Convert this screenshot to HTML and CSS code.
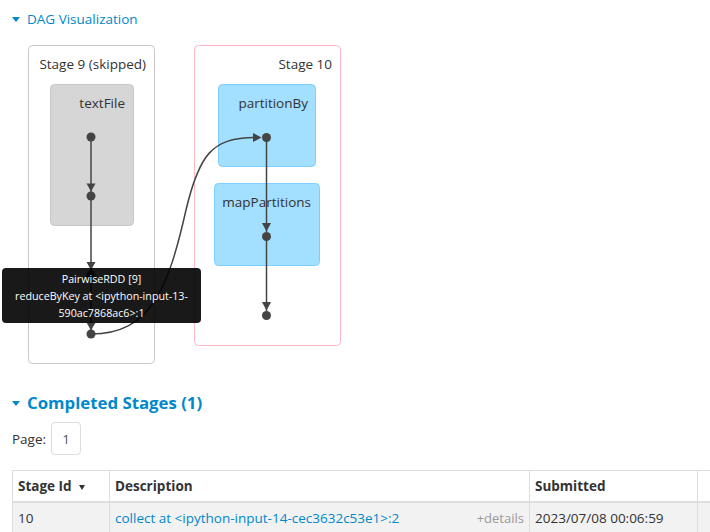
FILE: index.html
```html
<!DOCTYPE html>
<html>
<head>
<meta charset="utf-8">
<title>Stage</title>
<link rel="stylesheet" href="styles.css">
</head>
<body>
<div class="page">
  <a class="toggle"><span class="arrow"></span>DAG Visualization</a>
  <div class="dag">
    <svg class="dag-svg" width="340" height="334" viewBox="12 36 340 334" xmlns="http://www.w3.org/2000/svg">
      <rect class="stage skipped" x="28.5" y="45.5" width="126" height="318" rx="4"/>
      <text class="label" x="146" y="69" text-anchor="end">Stage 9 (skipped)</text>
      <rect class="cluster skipped" x="50.5" y="84.5" width="83" height="141" rx="4"/>
      <text class="label" x="125" y="108" text-anchor="end">textFile</text>

      <rect class="stage" x="194.5" y="45.5" width="146" height="300" rx="4"/>
      <text class="label" x="332" y="69" text-anchor="end">Stage 10</text>
      <rect class="cluster" x="218.5" y="84.5" width="97" height="82" rx="4"/>
      <text class="label" x="308" y="108" text-anchor="end">partitionBy</text>
      <rect class="cluster" x="214.5" y="183.5" width="105" height="82" rx="4"/>
      <text class="label" x="311" y="207" text-anchor="end">mapPartitions</text>

      <path class="edge" d="M91 137 V192"/>
      <path class="edge" d="M91 196 V271"/>
      <path class="edge" d="M91 275 V330"/>
      <path class="edge" d="M91 334 C150 334 168 290 186 210 C199 155 212 137.5 255 137.5"/>
      <path class="edge" d="M266.5 137.5 V232"/>
      <path class="edge" d="M266.5 236.5 V311"/>

      <polygon class="head" points="86.5,183.5 95.5,183.5 91,191.5"/>
      <polygon class="head" points="86.5,262 95.5,262 91,270"/>
      <polygon class="head" points="86.5,322.5 95.5,322.5 91,330.5"/>
      <polygon class="head" points="253,133 253,142 261.5,137.5"/>
      <polygon class="head" points="262,223 271,223 266.5,231.5"/>
      <polygon class="head" points="262,302 271,302 266.5,310.5"/>

      <circle class="node" cx="91" cy="137" r="4.5"/>
      <circle class="node" cx="91" cy="196" r="4.5"/>
      <circle class="node" cx="91" cy="275" r="4.5"/>
      <circle class="node" cx="91" cy="334" r="4.5"/>
      <circle class="node" cx="266.5" cy="137.5" r="4.5"/>
      <circle class="node" cx="266.5" cy="236.5" r="4.5"/>
      <circle class="node" cx="266.5" cy="315.5" r="4.5"/>
    </svg>
    <div class="tooltip">PairwiseRDD [9]<br>reduceByKey at &lt;ipython-input-13-<br>590ac7868ac6&gt;:1</div>
  </div>

  <h4 class="section"><span class="arrow big"></span>Completed Stages (1)</h4>
  <div class="paging"><span>Page:</span><span class="page-box">1</span></div>

  <div class="table-wrap">
    <table class="stages">
      <colgroup>
        <col class="c-id"><col class="c-desc"><col class="c-sub"><col class="c-dur">
      </colgroup>
      <thead>
        <tr>
          <th>Stage Id <span class="sort"></span></th>
          <th>Description</th>
          <th>Submitted</th>
          <th></th>
        </tr>
      </thead>
      <tbody>
        <tr>
          <td>10</td>
          <td><a class="name">collect at &lt;ipython-input-14-cec3632c53e1&gt;:2</a><span class="details">+details</span></td>
          <td>2023/07/08 00:06:59</td>
          <td></td>
        </tr>
      </tbody>
    </table>
  </div>
</div>
</body>
</html>
```

FILE: styles.css
```css
html {
  overflow: hidden;
}

body {
  margin: 0;
  font-family: "Open Sans", "Noto Sans", sans-serif;
  font-size: 13.5px;
  color: #333;
  background: #fff;
}

.page {
  padding-left: 12px;
}

.toggle {
  display: flex;
  align-items: center;
  margin-top: 9px;
  height: 20px;
  line-height: 20px;
  color: #0088cc;
  font-size: 13.5px;
}

.arrow {
  width: 0;
  height: 0;
  border-left: 4px solid transparent;
  border-right: 4px solid transparent;
  border-top: 5px solid #0088cc;
  margin-right: 7px;
}

.arrow.big {
  border-left-width: 4.5px;
  border-right-width: 4.5px;
  margin-right: 7px;
}

.dag {
  position: relative;
  margin-top: 7px;
  height: 334px;
}

.dag-svg {
  display: block;
}

.dag-svg .stage {
  fill: #fff;
  stroke: #ffb8c6;
  stroke-width: 1px;
}

.dag-svg .stage.skipped {
  stroke: #c8c8c8;
}

.dag-svg .cluster {
  fill: #a3dfff;
  stroke: #7ccfff;
  stroke-width: 1px;
}

.dag-svg .cluster.skipped {
  fill: #d6d6d6;
  stroke: #c6c6c6;
}

.dag-svg .label {
  fill: #333;
  font-family: "Open Sans", "Noto Sans", sans-serif;
  font-size: 13.5px;
}

.dag-svg .edge {
  fill: none;
  stroke: #444;
  stroke-width: 1.5px;
}

.dag-svg .head,
.dag-svg .node {
  fill: #444;
}

.tooltip {
  position: absolute;
  left: -10px;
  top: 232px;
  width: 199px;
  height: 55px;
  box-sizing: border-box;
  padding: 3px 4px 1px;
  border-radius: 4px;
  background: rgba(0, 0, 0, 0.9);
  color: #fff;
  font-size: 10.7px;
  line-height: 17px;
  text-align: center;
}

.section {
  display: flex;
  align-items: center;
  margin: 21px 0 0 0;
  height: 24px;
  line-height: 24px;
  font-size: 16.8px;
  font-weight: bold;
  color: #0088cc;
}

.paging {
  display: flex;
  align-items: center;
  gap: 5px;
  margin-top: 7px;
  height: 33px;
}

.page-box {
  width: 30px;
  height: 33px;
  box-sizing: border-box;
  border: 1px solid #ddd;
  border-radius: 4px;
  display: flex;
  align-items: center;
  justify-content: center;
  color: #555;
}

.table-wrap {
  margin-top: 15px;
  width: 900px;
}

.stages {
  border-collapse: collapse;
  table-layout: fixed;
  width: 885px;
  border: 1px solid #ddd;
}

.c-id { width: 97px; }
.c-desc { width: 420px; }
.c-sub { width: 168px; }
.c-dur { width: 200px; }

.stages th,
.stages td {
  text-align: left;
  padding: 0 5px;
  height: 30px;
  border-left: 1px solid #ddd;
  white-space: nowrap;
  vertical-align: middle;
}

.stages th {
  font-weight: bold;
  background: #fff;
  border-bottom: 2px solid #ddd;
}

.stages td {
  background: #f2f2f2;
  border-top: 1px solid #ddd;
}

.sort {
  display: inline-block;
  width: 0;
  height: 0;
  border-left: 3px solid transparent;
  border-right: 3px solid transparent;
  border-top: 5px solid #333;
  margin-left: 4px;
  vertical-align: middle;
}

.name {
  color: #0088cc;
}

.details {
  float: right;
  color: #999;
  font-size: 13px;
}
```
